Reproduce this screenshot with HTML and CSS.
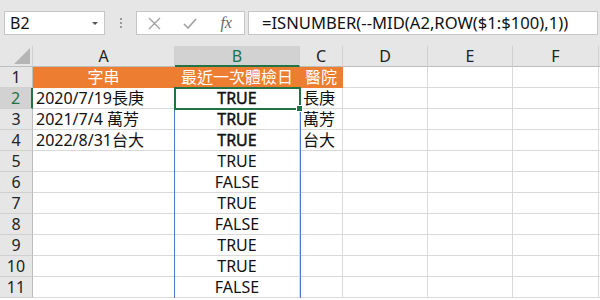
FILE: index.html
```html
<!DOCTYPE html>
<html>
<head>
    <title>ISNUMBER</title>
    <link rel="stylesheet" href="styles.css">
</head>
<body>
    <div class="toolbar">
        <div class="name-box">
            <span>B2</span>
            <span class="caret"></span>
        </div>
        <div class="grip"><i></i><i></i><i></i></div>
        <div class="fx-buttons">
            <svg width="13" height="13" viewBox="0 0 13 13"><path d="M1 1 L12 12 M12 1 L1 12" stroke="#a0a0a0" stroke-width="1.3" fill="none"/></svg>
            <svg width="14" height="11" viewBox="0 0 14 11"><path d="M1 6 L5 10 L13 1" stroke="#a0a0a0" stroke-width="1.6" fill="none"/></svg>
            <span class="fx">fx</span>
        </div>
        <div class="formula">=ISNUMBER(--MID(A2,ROW($1:$100),1))</div>
    </div>

    <div class="sheet">
        <!-- column headers -->
        <div class="hd corner"><span class="tri"></span></div>
        <div class="hd">A</div>
        <div class="hd sel-col">B</div>
        <div class="hd">C</div>
        <div class="hd">D</div>
        <div class="hd">E</div>
        <div class="hd">F</div>
        <div class="hd"></div>

        <!-- row 1 -->
        <div class="rh">1</div>
        <div class="c head">字串</div>
        <div class="c head">最近一次體檢日</div>
        <div class="c head">醫院</div>
        <div class="c"></div><div class="c"></div><div class="c"></div><div class="c"></div>

        <div class="rh sel-row">2</div>
        <div class="c">2020/7/19長庚</div>
        <div class="c mid strong">TRUE</div>
        <div class="c">長庚</div>
        <div class="c"></div><div class="c"></div><div class="c"></div><div class="c"></div>

        <div class="rh">3</div>
        <div class="c">2021/7/4 萬芳</div>
        <div class="c mid strong">TRUE</div>
        <div class="c">萬芳</div>
        <div class="c"></div><div class="c"></div><div class="c"></div><div class="c"></div>

        <div class="rh">4</div>
        <div class="c">2022/8/31台大</div>
        <div class="c mid strong">TRUE</div>
        <div class="c">台大</div>
        <div class="c"></div><div class="c"></div><div class="c"></div><div class="c"></div>

        <div class="rh">5</div>
        <div class="c"></div>
        <div class="c mid">TRUE</div>
        <div class="c"></div><div class="c"></div><div class="c"></div><div class="c"></div><div class="c"></div>

        <div class="rh">6</div>
        <div class="c"></div>
        <div class="c mid">FALSE</div>
        <div class="c"></div><div class="c"></div><div class="c"></div><div class="c"></div><div class="c"></div>

        <div class="rh">7</div>
        <div class="c"></div>
        <div class="c mid">TRUE</div>
        <div class="c"></div><div class="c"></div><div class="c"></div><div class="c"></div><div class="c"></div>

        <div class="rh">8</div>
        <div class="c"></div>
        <div class="c mid">FALSE</div>
        <div class="c"></div><div class="c"></div><div class="c"></div><div class="c"></div><div class="c"></div>

        <div class="rh">9</div>
        <div class="c"></div>
        <div class="c mid">TRUE</div>
        <div class="c"></div><div class="c"></div><div class="c"></div><div class="c"></div><div class="c"></div>

        <div class="rh">10</div>
        <div class="c"></div>
        <div class="c mid">TRUE</div>
        <div class="c"></div><div class="c"></div><div class="c"></div><div class="c"></div><div class="c"></div>

        <div class="rh">11</div>
        <div class="c"></div>
        <div class="c mid">FALSE</div>
        <div class="c"></div><div class="c"></div><div class="c"></div><div class="c"></div><div class="c"></div>

        <!-- overlays: spill range and active cell -->
        <div class="spill"></div>
        <div class="active"><span class="handle"></span></div>
    </div>
</body>
</html>
```

FILE: styles.css
```css
body {
    margin: 0;
    width: 600px;
    height: 300px;
    overflow: hidden;
    background: #ffffff;
    font-family: "Noto Sans", "Noto Sans CJK TC", sans-serif;
    color: #111;
}
.toolbar {
    height: 46px;
    box-sizing: border-box;
    background: #e6e6e6;
    display: flex;
    align-items: center;
    padding: 0 2px 0 4px;
}
.name-box {
    width: 101px;
    height: 24px;
    box-sizing: border-box;
    background: #fff;
    border: 1px solid #c6c6c6;
    display: flex;
    align-items: center;
    justify-content: space-between;
    padding: 0 6px 0 5px;
    font-size: 16px;
}
.caret {
    width: 0;
    height: 0;
    border-left: 3px solid transparent;
    border-right: 3px solid transparent;
    border-top: 3px solid #555;
}
.grip {
    width: 31px;
    display: flex;
    flex-direction: column;
    align-items: center;
    gap: 2px;
}
.grip i {
    width: 2px;
    height: 2px;
    background: #9a9a9a;
}
.fx-buttons {
    width: 109px;
    height: 24px;
    box-sizing: border-box;
    background: #fff;
    border: 1px solid #c6c6c6;
    display: grid;
    grid-template-columns: 1fr 1fr 1fr;
    align-items: center;
    justify-items: center;
}
.fx {
    font-family: "Liberation Serif", serif;
    font-style: italic;
    font-size: 16px;
    color: #666;
    line-height: 1;
}
.formula {
    flex: 1;
    margin-left: 3px;
    height: 24px;
    box-sizing: border-box;
    background: #fff;
    border: 1px solid #c6c6c6;
    padding-left: 13px;
    font-size: 16.6px;
    line-height: 22px;
    white-space: nowrap;
    overflow: hidden;
}
.sheet {
    position: relative;
    display: grid;
    grid-template-columns: 33px 142px 125px 43px 85px 85px 86px 1fr;
    grid-auto-rows: 21px;
    font-size: 16px;
    line-height: 20px;
}
.hd, .rh {
    background: #e6e6e6;
    color: #222;
    text-align: center;
    box-sizing: border-box;
    border-right: 1px solid #d0d0d0;
    border-bottom: 1px solid #bdbdbd;
}
.rh {
    border-right: 1px solid #bdbdbd;
    border-bottom: 1px solid #d0d0d0;
}
.corner {
    position: relative;
}
.tri {
    position: absolute;
    right: 2px;
    bottom: 2px;
    width: 0;
    height: 0;
    border-left: 16px solid transparent;
    border-bottom: 16px solid #b5b5b5;
}
.sel-col {
    background: #d2d2d2;
    color: #217346;
    border-bottom: 2px solid #217346;
}
.sel-row {
    background: #d2d2d2;
    color: #217346;
    border-right: 2px solid #217346;
}
.c {
    box-sizing: border-box;
    border-right: 1px solid #d9d9d9;
    border-bottom: 1px solid #d9d9d9;
    padding-left: 3px;
    white-space: nowrap;
    overflow: hidden;
}
.mid {
    text-align: center;
    padding-left: 0;
}
.strong {
    -webkit-text-stroke: 0.45px currentColor;
}
.head {
    background: #ed7d31;
    border-color: #ed7d31;
    color: #fff;
    text-align: center;
    padding-left: 0;
}
.spill {
    position: absolute;
    left: 174px;
    top: 63px;
    width: 125px;
    bottom: 0;
    border-left: 1px solid #4a7bd0;
    border-right: 1px solid #4a7bd0;
}
.active {
    position: absolute;
    left: 174px;
    top: 41px;
    width: 127px;
    height: 23px;
    box-sizing: border-box;
    border: 2px solid #217346;
}
.handle {
    position: absolute;
    right: -4px;
    bottom: -4px;
    width: 5px;
    height: 5px;
    background: #217346;
    border: 1px solid #fff;
}
```
